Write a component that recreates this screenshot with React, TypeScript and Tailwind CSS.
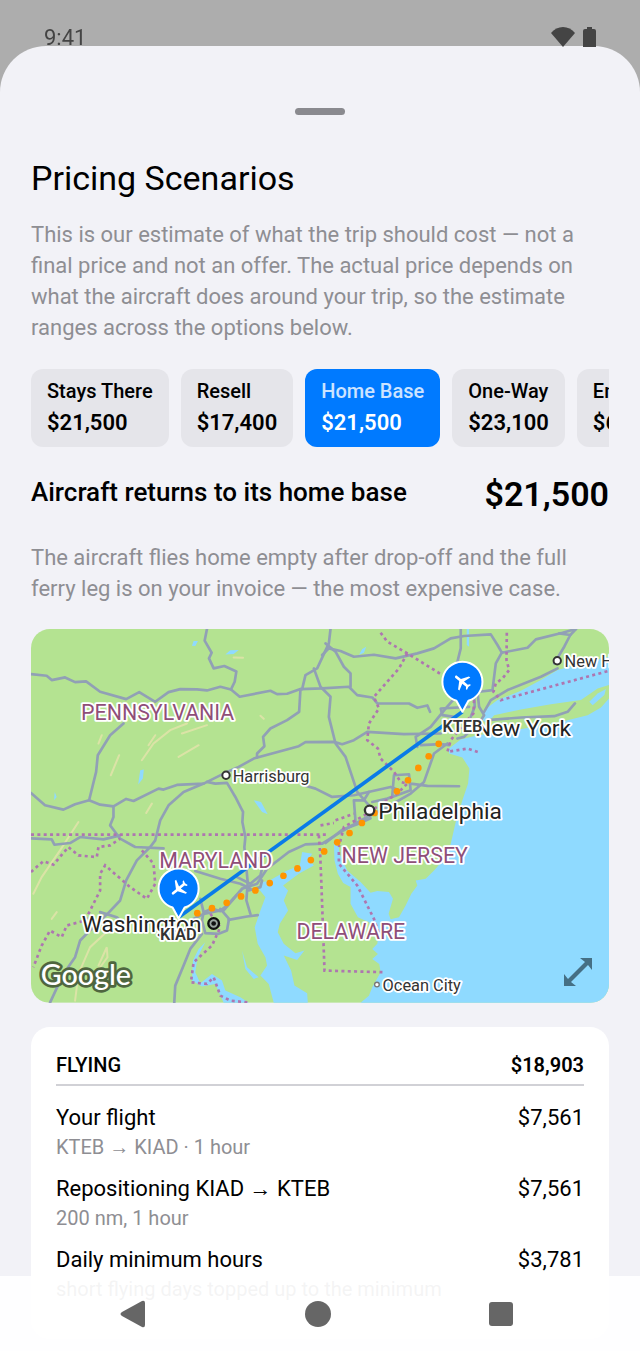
import React, { useState } from 'react';
import { MdFlight } from 'react-icons/md';

type Scenario = {
  id: string;
  label: string;
  price: string;
};

const SCENARIOS: Scenario[] = [
  { id: 'stays', label: 'Stays There', price: '$21,500' },
  { id: 'resell', label: 'Resell', price: '$17,400' },
  { id: 'home', label: 'Home Base', price: '$21,500' },
  { id: 'oneway', label: 'One-Way', price: '$23,100' },
  { id: 'empty', label: 'Empty Leg', price: '$6,900' },
];

const LINE_ITEMS = [
  { title: 'Your flight', detail: 'KTEB → KIAD · 1 hour', amount: '$7,561' },
  { title: 'Repositioning KIAD → KTEB', detail: '200 nm, 1 hour', amount: '$7,561' },
  { title: 'Daily minimum hours', detail: 'short flying days topped up to the minimum', amount: '$3,781' },
];

const ROADS = [
  // Pennsylvania
  'M33 162 L80 167 L95 180 L135 172 L165 186 L198 184 L240 215 L318 237 L357 216 L405 245 L445 216 L480 207 L530 208 L560 211 L600 200 L632 208 L658 230 L750 212 L770 222 L800 221 L840 207 L905 205 L985 200 L1010 225 L1055 232 L1070 250 L1165 250 L1190 263 L1220 256 L1228 275',
  'M560 27 L553 62 L574 98 L566 115 L580 145 L612 138 L648 154 L643 185 L632 208',
  'M310 310 L270 345 L233 405 L228 455 L207 540 L165 552 L130 568 L75 555 L33 518',
  'M207 540 L240 553 L280 558 L318 536 L340 542 L415 505 L430 508 L470 494 L550 490 L610 460 L655 440 L700 415 L835 378 L855 366 L940 365 L965 372 L1000 360 L1040 335 L1150 342 L1260 340',
  'M840 207 L836 275 L800 300 L750 325 L728 350 L732 378 L710 400 L710 412',
  'M845 207 L855 165 L890 145 L925 70 L930 27',
  'M880 145 L900 200 L930 230 L925 290 L945 370 L975 410 L1010 515 L1045 555',
  'M915 70 L945 95 L970 140 L990 160 L990 200',
  'M905 105 L925 85 L960 93 L1000 110 L1060 104 L1125 115 L1190 100 L1240 85 L1290 55 L1330 48 L1410 43 L1430 75 L1443 98 L1520 83 L1545 58 L1625 38 L1665 27',
  'M1320 27 L1320 85 L1310 125 L1310 165',
  'M1443 98 L1425 130 L1415 210 L1375 215',
  'M1610 145 L1560 170 L1460 210 L1410 240 L1390 275',
  'M1615 40 L1648 45 L1630 80 L1600 130',
  'M1648 45 L1665 27',
  'M550 490 L490 515 L445 555 L420 600 L405 660 L390 680',
  'M560 485 L585 490 L620 488 L645 530 L668 575 L666 605 L675 650 L672 680 L682 785',
  'M280 558 L280 590 L270 615 L285 635 L300 655 L345 680 L430 684',
  'M33 654 L95 657 L103 673 L150 668 L180 650 L250 657 L300 645',
  'M390 680 L350 720 L318 780 L300 840 L262 880 L235 905 L180 960 L165 1010 L130 1060 L90 1146',
  'M240 875 L290 890 L300 900',
  'M850 495 L885 505 L935 530 L1000 525 L1110 500 L1130 508',
  'M525 752 L600 775 L660 790 L690 805',
  'M650 770 L690 790 L720 765 L725 745',
  'M905 670 L855 672 L805 695 L740 745 L710 790 L665 805 L620 855 L600 870 L550 880 L510 900',
  'M665 805 L640 835 L610 870 M685 810 L720 800 L725 780',
  'M682 785 L678 840 L690 880 M625 898 L680 888 L712 884',
  'M600 865 L626 895 L620 930 L595 940 L555 938 L545 900 L550 875 L575 865 L600 872 M550 875 L540 835',
  'M545 940 L510 985 L490 1035 L465 1095 L462 1146',
  // northeast corridor
  'M905 670 L960 635 L1040 590 L1100 560 L1170 520 L1210 485 L1240 400 L1280 370',
  'M915 668 L965 628 L1010 612 L1050 594',
  'M1115 525 L1120 465 L1165 462 L1170 510 L1100 535 L1055 545 M1170 490 L1220 497 L1315 498',
  'M1045 515 L1030 540 L1000 540 L1005 605',
  'M1190 380 L1185 350 L1230 320 L1275 265 L1310 225 M1200 375 L1260 372 L1285 375',
  'M1345 260 L1260 265 L1265 285 L1300 290 M1370 215 L1375 260 L1390 285 L1380 300 M1360 225 L1362 260 L1350 290 M1310 355 L1330 350 L1350 330',
  'M1400 300 L1500 292 L1600 288 L1640 275 L1662 250',
];

const BORDERS = [
  'M33 643 L920 643 M895 645 L899 700 L903 800 L912 1050 L1092 1055',
  'M945 600 L1000 580 M900 615 L940 608 M955 695 L955 730 L1010 795 L1060 895 L1075 940',
  'M1080 38 L1100 65 L1160 100 L1265 165',
  'M1160 100 L1135 145 L1060 230 L1075 265 L1045 310 L1040 360 L1072 385 L1080 415 L1120 455 L1140 485 L1160 490 L1130 520 L1090 545 L1040 580 L970 620 L955 680',
  'M1458 38 L1457 120 L1465 150 L1445 175 L1425 190 L1418 215 L1440 240 L1765 152',
  'M1360 240 L1358 280 L1330 310 L1290 360 L1280 395 L1340 385 L1375 397',
  'M33 755 L70 722 L100 733 L145 680 L175 705 L230 710 L235 680 L270 675 L300 655',
  'M365 690 L400 730 L405 790 L380 835 L330 800 L255 735 L240 760 L240 810 L195 900 L140 915 L125 950 L90 930 L65 975 L40 1040',
  'M570 880 L600 920 L575 975 L520 1025 L512 1085 L560 1090 L580 1070 L600 1125 L630 1140 L690 1146',
];

const FLIGHT_DOTS = [
  [531, 878], [575, 863], [619, 847], [662, 828], [705, 810], [748, 788], [789, 766], [831, 744], [871, 719],
  [911, 693], [950, 666], [987, 638], [1024, 608], [1062, 578], [1129, 513], [1162, 480], [1193, 443], [1224, 408], [1254, 371],
];

type PinProps = { x: number; y: number; angle: number };

// x / y is the tip of the pin
const AirportPin: React.FC<PinProps> = ({ x, y, angle }) => (
  <g transform={`translate(${x} ${y})`}>
    <path d="M0 0 L-18 -33 C-44 -41 -60 -64 -60 -90 A60 60 0 1 1 60 -90 C60 -64 44 -41 18 -33 Z" fill="#007aff" stroke="#fff" strokeWidth="6" strokeLinejoin="round" />
    <g transform={`translate(0 -91) rotate(${angle})`}>
      <MdFlight x={-32} y={-32} size={64} color="#fff" />
    </g>
  </g>
);

type LabelProps = { x: number; y: number; size: string; color: string; weight?: number; children: string };

const MapLabel: React.FC<LabelProps> = ({ x, y, size, color, weight = 400, children }) => (
  <text x={x} y={y} className={size} fill={color} fontWeight={weight} stroke="#fff" strokeWidth="11" strokeLinejoin="round" paintOrder="stroke">
    {children}
  </text>
);

const RouteMap: React.FC = () => (
  <div className="relative mt-[25px] overflow-hidden rounded-[19px]">
    <svg viewBox="33 27 1731 1119" className="block w-full" role="img" aria-label="Route from KTEB to KIAD">
      <rect x="33" y="27" width="1731" height="1119" fill="#b4e391" />

      <g fill="none" stroke="#dbe3a6" strokeWidth="6" strokeLinecap="round">
        <path d="M365 420 L400 370 L450 330 L500 310 M385 375 L405 345 M475 410 L535 375 M272 465 L297 405 M235 370 L245 345 M640 112 L668 113 M378 578 L395 550 M720 287 L730 296 M485 340 L560 315" />
        <path d="M175 605 L120 690 L65 770 L40 820 M280 915 L210 980 L175 1060 L165 1140 M235 1035 L260 980 L262 1010 L240 1040 M95 895 L110 875" />
      </g>

      <g fill="#8fdaff">
        {/* Atlantic, Delaware Bay */}
        <path d="M1764 235 L1740 262 L1700 285 L1600 310 L1480 330 L1370 345 L1320 358 L1285 385 L1285 400 L1325 412 L1346 445 L1342 490 L1325 540 L1305 605 L1290 670 L1275 710 L1240 750 L1215 775 L1185 780 L1190 795 L1172 820 L1155 855 L1135 890 L1110 896 L1104 880 L1117 835 L1105 815 L1070 812 L1050 817 L1020 785 L980 750 L957 700 L952 660 L940 665 L942 720 L952 760 L968 788 L990 800 L990 850 L1012 890 L1045 905 L1075 935 L1070 970 L1055 985 L1072 1000 L1055 1015 L1076 1030 L1080 1055 L1055 1100 L1045 1125 L1020 1146 L1764 1146 Z" />
        {/* Long Island Sound */}
        <path d="M1764 110 L1700 125 L1610 150 L1560 180 L1500 212 L1430 240 L1390 270 L1385 300 L1400 310 L1420 285 L1500 268 L1590 252 L1680 240 L1730 205 L1764 195 Z" />
        <path d="M1705 245 L1730 220 L1755 207 L1750 225 L1715 255 Z" />
        {/* Chesapeake Bay */}
        <path d="M875 700 L845 695 L838 735 L800 750 L745 782 L725 785 L715 805 L735 830 L720 870 L703 920 L712 970 L735 1010 L740 1035 L720 1065 L745 1090 L760 1146 L862 1146 L860 1118 L822 1095 L812 1050 L790 1005 L830 1018 L852 990 L825 998 L790 970 L772 935 L778 910 L803 870 L790 840 L803 810 L788 795 L835 760 L880 735 L865 715 Z" />
        <path d="M585 935 L555 965 L532 1010 L525 1055 L540 1088 L575 1060 L605 1080 L615 1110 L660 1130 L685 1146 L610 1146 L585 1090 L545 1098 L515 1080 L518 1020 L535 985 Z" />
        <path d="M665 990 L680 1040 L715 1070 L700 1075 L675 1045 Z M515 77 L520 63 L533 63 L525 78 Z M615 103 L630 91 L655 90 L640 102 Z M354 493 L360 450 L371 448 L368 475 Z M102 540 L104 515 L110 530 Z M700 540 L722 545 L742 582 L725 575 Z M1015 105 L1025 87 L1037 80 L1030 98 Z M1338 27 L1345 27 L1345 80 L1338 75 Z" />
      </g>

      <g fill="none" stroke="#91a0b5" strokeWidth="8" strokeLinejoin="round" strokeLinecap="round">
        {ROADS.map((d) => (
          <path key={d} d={d} />
        ))}
      </g>
      <g fill="none" stroke="#ae76b0" strokeWidth="8" strokeDasharray="9 10">
        {BORDERS.map((d) => (
          <path key={d} d={d} />
        ))}
      </g>

      <path d="M475 890 L1325 275" stroke="#0a7be8" strokeWidth="11" />
      <g fill="#ff9500">
        {FLIGHT_DOTS.map(([cx, cy]) => (
          <circle key={cx} cx={cx} cy={cy} r="10" />
        ))}
      </g>

      <g fill="#fff" stroke="#333" strokeWidth="6">
        <circle cx="617" cy="465" r="11" />
        <circle cx="1609" cy="122" r="11" />
        <circle cx="1047" cy="570" r="14" strokeWidth="7" />
        <circle cx="1069" cy="1092" r="7" stroke="#777" strokeWidth="4" />
        <circle cx="580" cy="909" r="16" fill="#9ba5a0" stroke="#111" strokeWidth="7" />
        <circle cx="580" cy="909" r="7" fill="#111" stroke="none" />
      </g>

      <g fontFamily="Roboto, sans-serif">
        <MapLabel x={183} y={301} size="text-[64px]" color="#8f4e78">PENNSYLVANIA</MapLabel>
        <MapLabel x={417} y={743} size="text-[64px]" color="#8f4e78">MARYLAND</MapLabel>
        <MapLabel x={963} y={727} size="text-[64px]" color="#8f4e78">NEW JERSEY</MapLabel>
        <MapLabel x={828} y={955} size="text-[64px]" color="#8f4e78">DELAWARE</MapLabel>
        <MapLabel x={637} y={485} size="text-[49px]" color="#333">Harrisburg</MapLabel>
        <MapLabel x={1631} y={142} size="text-[49px]" color="#333">New Haven</MapLabel>
        <MapLabel x={1086} y={1112} size="text-[49px]" color="#333">Ocean City</MapLabel>
        <MapLabel x={1073} y={596} size="text-[68px]" color="#222">Philadelphia</MapLabel>
        <MapLabel x={1363} y={348} size="text-[68px]" color="#222">New York</MapLabel>
        <MapLabel x={185} y={935} size="text-[68px]" color="#222">Washington</MapLabel>
        <MapLabel x={1265} y={336} size="text-[49px]" color="#333" weight={600}>KTEB</MapLabel>
        <MapLabel x={419} y={957} size="text-[49px]" color="#333" weight={600}>KIAD</MapLabel>
      </g>

      <AirportPin x={1325} y={275} angle={-50} />
      <AirportPin x={475} y={894} angle={230} />

      <text x="62" y="1092" className="text-[86px]" fontFamily="Lato, sans-serif" fontWeight="500" fill="#fff" stroke="#4f663f" strokeWidth="16" strokeLinejoin="round" paintOrder="stroke">
        Google
      </text>
    </svg>
    <button type="button" aria-label="Expand map" className="absolute right-4 bottom-4 size-7.5">
      <svg viewBox="0 0 30 30" className="size-full" fill="#456f84">
        <path d="M17 1 H29 V13 L25 8 L8 25 L13 29 H1 V17 L5 22 L22 5 Z" />
      </svg>
    </button>
  </div>
);

const ScenarioChips: React.FC<{ selected: string; onSelect: (id: string) => void }> = ({ selected, onSelect }) => (
  <div className="mt-[26px] flex gap-3 overflow-x-auto [scrollbar-width:none]">
    {SCENARIOS.map((s) => {
      const active = s.id === selected;
      return (
        <button
          key={s.id}
          type="button"
          aria-pressed={active}
          onClick={() => onSelect(s.id)}
          className={`shrink-0 rounded-xl px-4 pt-2 pb-2.5 text-left ${active ? 'bg-[#007aff] text-white' : 'bg-[#e5e5ea] text-black'}`}
        >
          <span className={`block text-[20px] leading-7 font-medium ${active ? 'text-white/80' : ''}`}>{s.label}</span>
          <span className="block pt-1 text-[22px] leading-7 font-semibold">{s.price}</span>
        </button>
      );
    })}
  </div>
);

const CostCard: React.FC = () => (
  <section className="mt-6 rounded-[19px] bg-white px-[25px] pt-6 pb-6">
    <div className="flex items-center justify-between border-b-2 border-[#d1d1d6] pb-[5px] text-[20px] leading-7 font-medium">
      <h3>FLYING</h3>
      <span className="font-semibold">$18,903</span>
    </div>
    <ul className="pt-4">
      {LINE_ITEMS.map((item) => (
        <li key={item.title} className="flex items-start justify-between pb-3">
          <div>
            <p className="text-[22px] leading-[31px]">{item.title}</p>
            <p className="text-[20px] leading-7 text-[#8e8e93]">{item.detail}</p>
          </div>
          <span className="text-[22px] leading-[31px]">{item.amount}</span>
        </li>
      ))}
    </ul>
  </section>
);

const StatusBar: React.FC = () => (
  <header className="relative z-10 flex h-[46px] shrink-0 items-start justify-between pt-[27px] pr-11 pl-11 text-[#444]">
    <span className="text-[22px] leading-[22px]">9:41</span>
    <div className="flex gap-2">
      <svg viewBox="0 0 24 20" className="h-5 w-6" fill="currentColor">
        <path d="M12 20 L0 6 C6 -2 18 -2 24 6 Z" />
      </svg>
      <svg viewBox="0 0 13 20" className="h-5 w-[13px]" fill="currentColor">
        <path d="M4 0 H9 V2 H11 Q13 2 13 4 V20 H0 V4 Q0 2 2 2 H4 Z" />
      </svg>
    </div>
  </header>
);

const NavBar: React.FC = () => (
  <nav className="absolute inset-x-0 bottom-0 flex h-[75px] items-center justify-around bg-white/90 pr-12 pl-10 text-[#666]">
    <button type="button" aria-label="Back">
      <svg viewBox="0 0 28 28" className="size-7" fill="currentColor">
        <path d="M3 12 L23 1 Q26 0 26 3 V25 Q26 28 23 27 L3 16 Q0 14 3 12 Z" />
      </svg>
    </button>
    <button type="button" aria-label="Home" className="size-[26px] rounded-full bg-[#666]" />
    <button type="button" aria-label="Recent apps" className="size-6 rounded-[3px] bg-[#666]" />
  </nav>
);

const App: React.FC = () => {
  const [selected, setSelected] = useState('home');

  return (
    <div className="relative flex h-screen flex-col overflow-hidden bg-[#adadad] font-['Roboto',sans-serif]">
      <StatusBar />
      <main className="min-h-0 flex-1 overflow-y-auto rounded-t-[46px] bg-[#f2f2f7] px-[31px] pb-[75px] text-black [scrollbar-width:none]">
        <div className="mx-auto mt-[62px] h-[7px] w-[50px] rounded-full bg-[#8a8a8f]" />
        <h1 className="mt-10 text-[34px] leading-[46px]">Pricing Scenarios</h1>
        <p className="mt-[18px] text-[22px] leading-[31px] text-[#8e8e93]">
          This is our estimate of what the trip should cost — not a final price and not an offer. The actual price depends on what the aircraft does around your trip, so the estimate ranges across the options below.
        </p>
        <ScenarioChips selected={selected} onSelect={setSelected} />
        <div className="mt-6 flex items-start justify-between">
          <h2 className="pt-1 text-[26px] leading-[34px] font-medium">Aircraft returns to its home base</h2>
          <span className="text-[34px] leading-[46px] font-semibold">$21,500</span>
        </div>
        <p className="mt-[25px] text-[22px] leading-[31px] text-[#8e8e93]">
          The aircraft flies home empty after drop-off and the full ferry leg is on your invoice — the most expensive case.
        </p>
        <RouteMap />
        <CostCard />
      </main>
      <NavBar />
    </div>
  );
};

export default App;
